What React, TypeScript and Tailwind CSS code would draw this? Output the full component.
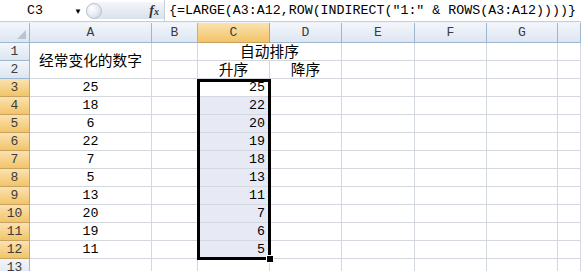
const colA = [25, 18, 6, 22, 7, 5, 13, 20, 19, 11];
const colC = [25, 22, 20, 19, 18, 13, 11, 7, 6, 5];
const letters = ["A", "B", "C", "D", "E", "F", "G", ""];

const mono = "font-['Liberation_Mono','Noto_Sans_CJK_SC',monospace]";
const cjk = "font-['Noto_Sans_CJK_SC',sans-serif] text-[14.7px] leading-none";

const cell = "border-r border-b border-[#d3d8df] bg-white";
const hdr =
  "flex items-center justify-center border-r border-b border-[#9eb6ce] bg-gradient-to-b from-[#f3f6fb] to-[#dde6f1] text-[#3c3c3c] text-[13px]";
const hdrOn =
  "flex items-center justify-center border-r border-b border-[#c9a25f] bg-gradient-to-b from-[#fbe2b0] to-[#f2c466] text-[#3c3c3c] text-[13px]";

const FormulaBar = () => (
  <div className="flex h-[22px] items-stretch border-b border-[#c3cfdd] bg-white">
    <div className="flex w-[86px] items-center">
      <span className={`${mono} w-[70px] text-center text-[13.3px] text-black`}>C3</span>
      <span className="ml-[4px] text-[8px] text-black">▼</span>
    </div>
    <div className="my-[2px] flex w-[78px] items-center rounded-l-full bg-gradient-to-b from-[#f4f6fa] to-[#d9e1ec]">
      <div className="h-[16px] w-[16px] rounded-full border border-[#b9c4d2] bg-[radial-gradient(circle_at_35%_35%,#ffffff,#e1e7ef_60%,#b8c3d1)]" />
      <span className="ml-auto mr-[5px] font-['Liberation_Serif',serif] text-[14px] font-bold italic text-[#333]">
        f<span className="text-[10px]">x</span>
      </span>
    </div>
    <div className="w-px bg-[#c3cfdd]" />
    <div className={`${mono} flex items-center pl-[4px] text-[13.3px] text-black whitespace-nowrap`}>
      {'{=LARGE(A3:A12,ROW(INDIRECT("1:" & ROWS(A3:A12))))}'}
    </div>
  </div>
);

const App = () => {
  return (
    <div className="h-[271px] w-[581px] overflow-hidden bg-white">
      <FormulaBar />
      <div className="h-px bg-[#eef2f7]" />
      <div
        className={`relative grid grid-cols-[30px_122px_46px_72px_72px_73px_72px_71px_1fr] grid-rows-[20px_repeat(13,18px)] ${mono}`}
      >
        {/* header row */}
        <div className={`${hdr} relative`}>
          <div className="absolute bottom-[3px] right-[3px] h-0 w-0 border-b-[9px] border-l-[9px] border-b-[#b7c4d4] border-l-transparent" />
        </div>
        {letters.map((l, i) => (
          <div key={i} className={l === "C" ? hdrOn : hdr}>
            {l}
          </div>
        ))}

        {/* row 1 */}
        <div className={hdr}>1</div>
        <div className={`${cell} row-span-2 flex items-center justify-center ${cjk}`}>
          经常变化的数字
        </div>
        <div className={cell} />
        <div className={`${cell} col-span-2 flex items-center justify-center ${cjk}`}>
          自动排序
        </div>
        {[0, 1, 2, 3].map((i) => (
          <div key={i} className={cell} />
        ))}

        {/* row 2 */}
        <div className={hdr}>2</div>
        <div className={cell} />
        <div className={`${cell} flex items-end justify-center pb-[1px] ${cjk}`}>升序</div>
        <div className={`${cell} flex items-end justify-center pb-[1px] ${cjk}`}>降序</div>
        {[0, 1, 2, 3].map((i) => (
          <div key={i} className={cell} />
        ))}

        {/* data rows */}
        {colA.map((a, r) => (
          <div key={r} className="contents">
            <div className={hdrOn}>{r + 3}</div>
            <div className={`${cell} flex items-center justify-center text-[13.3px] text-black`}>{a}</div>
            <div className={cell} />
            <div
              className={`flex items-center justify-end border-r border-b border-[#d3d8df] pr-[4px] text-[13.3px] text-black ${
                r === 0 ? "bg-white" : "bg-[#e7eaf5]"
              }`}
            >
              {colC[r]}
            </div>
            {[0, 1, 2, 3, 4].map((i) => (
              <div key={i} className={cell} />
            ))}
          </div>
        ))}

        {/* row 13 */}
        <div className={hdr}>13</div>
        {[0, 1, 2, 3, 4, 5, 6, 7].map((i) => (
          <div key={i} className={cell} />
        ))}

        {/* selection */}
        <div className="pointer-events-none absolute left-[197px] top-[56px] h-[181px] w-[74px] border-[3px] border-black" />
        <div className="absolute left-[267px] top-[233px] h-[6px] w-[6px] bg-black outline outline-1 outline-white" />
      </div>
    </div>
  );
};

export default App;
